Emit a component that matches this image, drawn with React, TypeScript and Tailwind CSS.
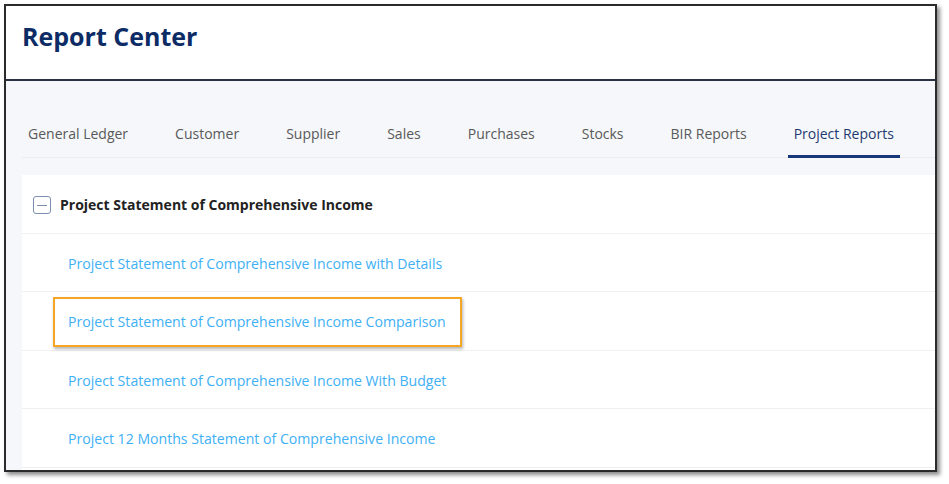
import React from "react";

const tabs = [
  "General Ledger",
  "Customer",
  "Supplier",
  "Sales",
  "Purchases",
  "Stocks",
  "BIR Reports",
  "Project Reports",
];

const links = [
  "Project Statement of Comprehensive Income with Details",
  "Project Statement of Comprehensive Income Comparison",
  "Project Statement of Comprehensive Income With Budget",
  "Project 12 Months Statement of Comprehensive Income",
];

export default function App() {
  return (
    <div
      className="w-[949px] h-[484px] bg-white pt-[4px] pl-[4px]"
      style={{ fontFamily: '"Open Sans", "Noto Sans", sans-serif' }}
    >
      <div className="w-[933px] h-[468px] border-2 border-[#2b2b2b] shadow-[3px_3px_4px_rgba(0,0,0,0.45)] flex flex-col overflow-hidden bg-[#f5f7fa]">
        <div className="h-[75px] shrink-0 bg-white border-b-2 border-[#2a3142] pl-[16px] pt-[12px]">
          <h1 className="text-[25px] font-bold text-[#0d2c66] leading-[36px] whitespace-nowrap">
            Report Center
          </h1>
        </div>
        <div className="pl-[16px] pt-[41px] shrink-0">
          <div className="flex gap-[35px] border-b border-[#eaecf0]">
            {tabs.map((t, i) => {
              const active = i === tabs.length - 1;
              return (
                <div
                  key={t}
                  className={
                    active
                      ? "px-[6px] pb-[9px] -mb-px border-b-[3px] border-[#17377a] text-[14px] leading-[24px] text-[#1e3a70] whitespace-nowrap"
                      : "px-[6px] pb-[9px] -mb-px border-b-[3px] border-transparent text-[14px] leading-[24px] text-[#595959] whitespace-nowrap"
                  }
                >
                  {t}
                </div>
              );
            })}
          </div>
        </div>
        <div className="ml-[16px] mt-[17px] flex-1 bg-white">
          <div className="h-[58.5px] border-b border-[#eef0f3] flex items-center pl-[11px] pt-[3px] gap-[9px]">
            <span className="w-[18px] h-[18px] rounded-[3px] border-[1.5px] border-[#7d8fb0] flex items-center justify-center bg-white">
              <span className="w-[10px] h-[1.5px] bg-[#7d8fb0]" />
            </span>
            <span className="text-[14px] font-bold text-[#222] leading-[24px] whitespace-nowrap">
              Project Statement of Comprehensive Income
            </span>
          </div>
          {links.map((l, i) => (
            <div
              key={l}
              className="relative h-[58.5px] border-b border-[#eef0f3] flex items-center pl-[46px] pt-[3px]"
            >
              <span className="text-[14.1px] text-[#40b0f5] leading-[24px] whitespace-nowrap">{l}</span>
              {i === 1 && (
                <div className="absolute left-[31px] top-[5px] w-[409px] h-[50px] border-2 border-[#f5a623] shadow-[1px_2px_3px_rgba(0,0,0,0.3)]" />
              )}
            </div>
          ))}
        </div>
      </div>
    </div>
  );
}
